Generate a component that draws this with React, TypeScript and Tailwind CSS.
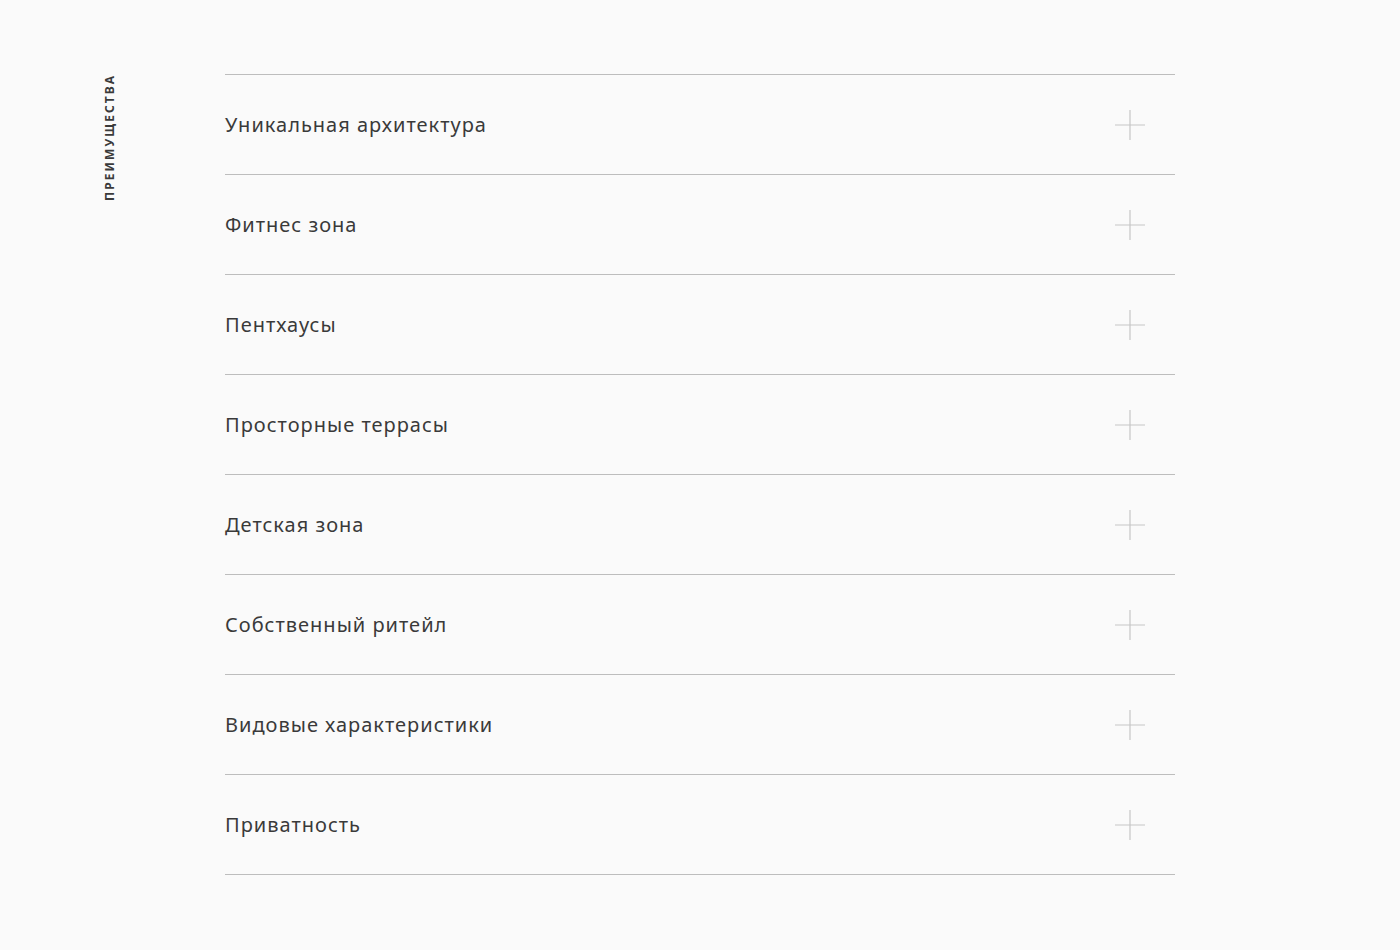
const items = [
  "Уникальная архитектура",
  "Фитнес зона",
  "Пентхаусы",
  "Просторные террасы",
  "Детская зона",
  "Собственный ритейл",
  "Видовые характеристики",
  "Приватность",
]

function PlusIcon() {
  return (
    <svg width="30" height="30" viewBox="0 0 30 30" fill="none">
      <path d="M15 0V30M0 15H30" stroke="#c6c6c6" strokeWidth="1.2" />
    </svg>
  )
}

export default function App() {
  return (
    <div className="min-h-[950px] bg-[#fafafa] font-['Noto_Sans',sans-serif] text-[#333]">
      <div className="flex pt-[74px]">
        <div className="w-[225px] pl-[101px]">
          <span className="inline-block rotate-180 text-[12px] font-bold uppercase tracking-[0.17em] text-[#3a3a3a] [writing-mode:vertical-rl]">
            Преимущества
          </span>
        </div>
        <ul className="w-[950px] border-t border-[#bdbdbd]">
          {items.map((item) => (
            <li
              key={item}
              className="box-border flex h-[100px] items-center justify-between border-b border-[#bdbdbd] pr-[30px]"
            >
              <span className="text-[20px] tracking-[0.05em] text-[#3a3a3a]">{item}</span>
              <PlusIcon />
            </li>
          ))}
        </ul>
      </div>
    </div>
  )
}
